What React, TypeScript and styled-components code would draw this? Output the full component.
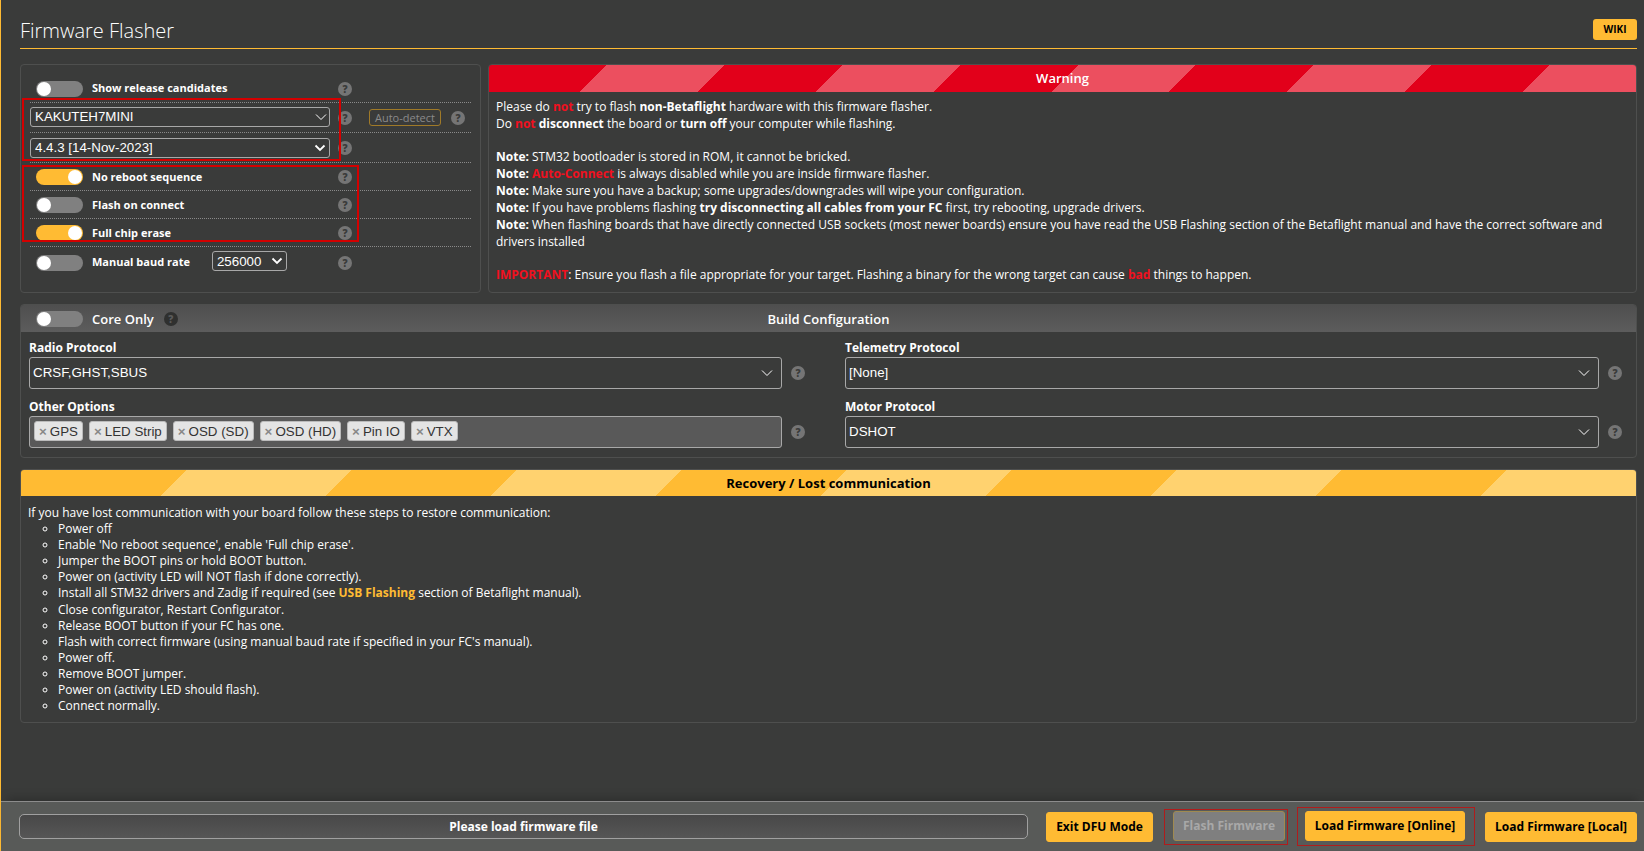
import React from "react"
import styled, { createGlobalStyle } from "styled-components"

const GlobalStyle = createGlobalStyle`
  html, body {
    margin: 0;
    height: 100%;
    background: #3a3b3a;
    overflow: hidden;
  }
  body {
    font-family: "Open Sans", sans-serif;
    font-size: 12px;
    color: #fff;
  }
  * {
    box-sizing: border-box;
  }
`

const Page = styled.div`
  display: flex;
  flex-direction: column;
  height: 100vh;
  border-left: 1px solid #ffbb33;
`

const Content = styled.main`
  flex: 1;
  padding: 0 7px 0 19px;
`

const TitleBar = styled.header`
  display: flex;
  justify-content: space-between;
  align-items: flex-start;
  height: 49px;
  border-bottom: 1px solid #ffbb33;
`

const Title = styled.h1`
  margin: 17px 0 0;
  font-size: 20px;
  font-weight: 300;
  line-height: 27px;
  color: #fff;
`

const WikiButton = styled.a`
  display: block;
  margin-top: 19px;
  width: 44px;
  height: 21px;
  border-radius: 3px;
  background: #ffbb33;
  color: #000;
  font-size: 10px;
  font-weight: 700;
  line-height: 21px;
  text-align: center;
`

const TopRow = styled.section`
  display: flex;
  gap: 7px;
  height: 229px;
  margin-top: 15px;
`

const OptionsPanel = styled.div`
  position: relative;
  width: 461px;
  padding: 0 9px;
  border: 1px solid #4e4f4e;
  border-radius: 4px;
`

const OptionRow = styled.div<{ $height: number; $top?: number; $last?: boolean }>`
  display: flex;
  align-items: center;
  height: ${(p) => p.$height}px;
  padding-top: ${(p) => p.$top ?? 0}px;
  border-bottom: ${(p) => (p.$last ? "none" : "1px dotted #8a8a8a")};
`

const ControlCell = styled.div`
  display: flex;
  align-items: center;
  width: 308px;
`

const Toggle = styled.span<{ $on?: boolean; $inset?: number }>`
  position: relative;
  flex: none;
  display: block;
  width: 47px;
  height: 16px;
  margin-left: ${(p) => p.$inset ?? 6}px;
  border-radius: 8px;
  background: ${(p) => (p.$on ? "#ffbb33" : "#808080")};

  &::after {
    content: "";
    position: absolute;
    top: 1px;
    left: ${(p) => (p.$on ? "32px" : "1px")};
    width: 14px;
    height: 14px;
    border-radius: 50%;
    background: #fff;
  }
`

const OptionLabel = styled.span<{ $up?: number }>`
  margin-left: 9px;
  margin-top: ${(p) => -(p.$up ?? 0)}px;
  font-size: 11px;
  font-weight: 700;
  color: #fff;
  white-space: nowrap;
`

const Help = styled.span<{ $dark?: boolean; $gap?: number }>`
  flex: none;
  display: block;
  width: 14px;
  height: 14px;
  margin-left: ${(p) => p.$gap ?? 0}px;
  border-radius: 50%;
  background: ${(p) => (p.$dark ? "#2f302f" : "#757575")};
  color: ${(p) => (p.$dark ? "#5a5a5a" : "#3a3b3a")};
  font-size: 10px;
  font-weight: 800;
  line-height: 14px;
  text-align: center;
`

const SelectWrap = styled.span<{ $width: number; $gap?: number; $up?: number }>`
  position: relative;
  display: block;
  flex: none;
  width: ${(p) => p.$width}px;
  margin-left: ${(p) => p.$gap ?? 0}px;
  margin-top: ${(p) => -(p.$up ?? 0)}px;
`

const NativeSelect = styled.select`
  display: block;
  width: 100%;
  height: 20px;
  padding: 0 4px;
  appearance: none;
  border: 1px solid #a8a8a8;
  border-radius: 3px;
  background: #3a3b3a;
  color: #fff;
  font-family: "Liberation Sans", Arial, sans-serif;
  font-size: 13.33px;
`

const Chevron = styled.svg<{ $right: number }>`
  position: absolute;
  top: 50%;
  right: ${(p) => p.$right}px;
  width: 12px;
  height: 8px;
  margin-top: -4px;
  fill: none;
  stroke: #fff;
  pointer-events: none;
`

const AutoDetect = styled.span`
  display: block;
  width: 72px;
  height: 17px;
  margin-left: 17px;
  border: 1px solid #a07a28;
  border-radius: 3px;
  color: #8a8a8a;
  font-size: 11px;
  line-height: 15px;
  text-align: center;
`

const RedFrame = styled.div<{ $left: number; $top: number; $width: number; $height: number }>`
  position: absolute;
  left: ${(p) => p.$left}px;
  top: ${(p) => p.$top}px;
  width: ${(p) => p.$width}px;
  height: ${(p) => p.$height}px;
  border: 2px solid #d40000;
  pointer-events: none;
`

const Box = styled.div<{ $grow?: boolean }>`
  flex: ${(p) => (p.$grow ? 1 : "none")};
  border: 1px solid #4e4f4e;
  border-radius: 4px;
  overflow: hidden;
`

const StripedTitle = styled.div<{ $base: string; $light: string; $band: number; $dark?: boolean; $height: number }>`
  height: ${(p) => p.$height}px;
  background: repeating-linear-gradient(
    135deg,
    ${(p) => p.$base} 0,
    ${(p) => p.$base} ${(p) => p.$band}px,
    ${(p) => p.$light} ${(p) => p.$band}px,
    ${(p) => p.$light} ${(p) => p.$band * 2}px
  );
  color: ${(p) => (p.$dark ? "#000" : "#fff")};
  font-size: 13px;
  font-weight: ${(p) => (p.$dark ? 700 : 600)};
  line-height: ${(p) => p.$height}px;
  text-align: center;
`

const NoteBody = styled.div`
  padding: 6px 7px;
  line-height: 17px;
  color: #fff;

  p {
    margin: 0;
  }
  p + p {
    margin-top: 16px;
  }
`

const Alert = styled.span`
  color: #f0101f;
  font-weight: 700;
`

const BuildBox = styled(Box)`
  margin-top: 11px;
  height: 154px;
`

const BuildTitle = styled.div`
  position: relative;
  display: flex;
  align-items: center;
  height: 27px;
  background: linear-gradient(180deg, #4f4f4f, #5c5c5c);
  font-size: 13px;
  font-weight: 600;
`

const BuildTitleText = styled.span`
  position: absolute;
  left: 0;
  right: 0;
  text-align: center;
  pointer-events: none;
`

const CoreOnly = styled.span`
  margin-left: 9px;
  margin-right: 10px;
  font-weight: 600;
`

const BuildGrid = styled.div`
  display: grid;
  grid-template-columns: 816px 1fr;
  padding: 8px 0 0 8px;
`

const Field = styled.div`
  height: 59px;
`

const FieldLabel = styled.div`
  font-weight: 700;
  line-height: 15px;
  height: 16px;
`

const FieldRow = styled.div`
  display: flex;
  align-items: center;
  margin-top: 1px;
`

const Multi = styled.div<{ $filled?: boolean; $width?: number }>`
  position: relative;
  display: flex;
  align-items: center;
  gap: 6px;
  width: ${(p) => p.$width ?? 753}px;
  height: 32px;
  padding: 0 ${(p) => (p.$filled ? 4 : 3)}px 2px;
  border: 1px solid #a8a8a8;
  border-radius: 3px;
  background: ${(p) => (p.$filled ? "#595959" : "#3a3b3a")};
  font-family: "Liberation Sans", Arial, sans-serif;
  font-size: 13.33px;
`

const Tag = styled.span`
  display: flex;
  align-items: center;
  height: 20px;
  padding: 0 4px;
  border: 1px solid #bbb;
  border-radius: 3px;
  background: #e4e4e4;
  color: #333;

  i {
    margin-right: 3px;
    color: #888;
    font-style: normal;
    font-weight: 700;
  }
`

const RecoveryBox = styled(Box)`
  margin-top: 11px;
  height: 254px;
`

const RecoveryBody = styled.div`
  padding: 9px 7px;
  line-height: 16px;
`

const Steps = styled.ul`
  margin: 0;
  padding-left: 30px;
  list-style: circle;

  li:nth-child(5) {
    height: 17px;
  }
`

const Highlight = styled.b`
  color: #ffbb33;
`

const Footer = styled.footer`
  display: flex;
  align-items: center;
  height: 50px;
  padding: 0 7px 0 18px;
  border-top: 1px solid #8c8c8c;
  background: #585a58;
  box-shadow: 0 -8px 10px -6px rgba(0, 0, 0, 0.25);
`

const Progress = styled.div`
  width: 1009px;
  height: 25px;
  margin-right: 18px;
  border: 1px solid #a0a0a0;
  border-radius: 5px;
  background: linear-gradient(180deg, #484848, #565656);
  font-weight: 700;
  line-height: 23px;
  text-align: center;
`

const ActionButton = styled.a<{ $disabled?: boolean; $width: number; $gap?: number }>`
  display: block;
  flex: none;
  width: ${(p) => p.$width}px;
  height: 30px;
  margin-left: ${(p) => p.$gap ?? 0}px;
  border: 1px solid ${(p) => (p.$disabled ? "#a08a50" : "#ffbb33")};
  border-radius: 3px;
  background: ${(p) => (p.$disabled ? "#7f7f7f" : "#ffbb33")};
  color: ${(p) => (p.$disabled ? "#a8a8a8" : "#000")};
  font-size: 12px;
  font-weight: 700;
  line-height: 28px;
  text-align: center;
`

const Marked = styled.span<{ $pad: string; $gap: number }>`
  display: block;
  flex: none;
  margin-left: ${(p) => p.$gap}px;
  padding: ${(p) => p.$pad};
  border: 1px solid #b01c1c;
`

const Arrow = () => (
  <Chevron viewBox="0 0 12 8" $right={4}>
    <path d="M1.5 1.5 L6 6 L10.5 1.5" strokeWidth="1.8" />
  </Chevron>
)

const ThinArrow = ({ right }: { right: number }) => (
  <Chevron viewBox="0 0 12 8" $right={right}>
    <path d="M1 1.5 L6 6.5 L11 1.5" strokeWidth="1" />
  </Chevron>
)

const steps = [
  "Power off",
  "Enable 'No reboot sequence', enable 'Full chip erase'.",
  "Jumper the BOOT pins or hold BOOT button.",
  "Power on (activity LED will NOT flash if done correctly).",
  null,
  "Close configurator, Restart Configurator.",
  "Release BOOT button if your FC has one.",
  "Flash with correct firmware (using manual baud rate if specified in your FC's manual).",
  "Power off.",
  "Remove BOOT jumper.",
  "Power on (activity LED should flash).",
  "Connect normally.",
]

const tags = ["GPS", "LED Strip", "OSD (SD)", "OSD (HD)", "Pin IO", "VTX"]

export default function App() {
  return (
    <Page>
      <GlobalStyle />
      <Content>
        <TitleBar>
          <Title>Firmware Flasher</Title>
          <WikiButton>WIKI</WikiButton>
        </TitleBar>

        <TopRow>
          <OptionsPanel>
            <OptionRow $height={38} $top={10}>
              <ControlCell>
                <Toggle />
                <OptionLabel $up={2}>Show release candidates</OptionLabel>
              </ControlCell>
              <Help>?</Help>
            </OptionRow>
            <OptionRow $height={30}>
              <ControlCell>
                <SelectWrap $width={300} $up={2}>
                  <NativeSelect defaultValue="KAKUTEH7MINI">
                    <option>KAKUTEH7MINI</option>
                  </NativeSelect>
                  <ThinArrow right={3} />
                </SelectWrap>
              </ControlCell>
              <Help>?</Help>
              <AutoDetect>Auto-detect</AutoDetect>
              <Help $gap={10}>?</Help>
            </OptionRow>
            <OptionRow $height={30}>
              <ControlCell>
                <SelectWrap $width={300}>
                  <NativeSelect defaultValue="4.4.3 [14-Nov-2023]">
                    <option>4.4.3 [14-Nov-2023]</option>
                  </NativeSelect>
                  <Arrow />
                </SelectWrap>
              </ControlCell>
              <Help>?</Help>
            </OptionRow>
            <OptionRow $height={28}>
              <ControlCell>
                <Toggle $on />
                <OptionLabel>No reboot sequence</OptionLabel>
              </ControlCell>
              <Help>?</Help>
            </OptionRow>
            <OptionRow $height={28}>
              <ControlCell>
                <Toggle />
                <OptionLabel>Flash on connect</OptionLabel>
              </ControlCell>
              <Help>?</Help>
            </OptionRow>
            <OptionRow $height={28}>
              <ControlCell>
                <Toggle $on />
                <OptionLabel>Full chip erase</OptionLabel>
              </ControlCell>
              <Help>?</Help>
            </OptionRow>
            <OptionRow $height={30} $top={2} $last>
              <ControlCell>
                <Toggle />
                <OptionLabel $up={4}>Manual baud rate</OptionLabel>
                <SelectWrap $width={75} $gap={22} $up={4}>
                  <NativeSelect defaultValue="256000">
                    <option>256000</option>
                  </NativeSelect>
                  <Arrow />
                </SelectWrap>
              </ControlCell>
              <Help>?</Help>
            </OptionRow>
            <RedFrame $left={1} $top={33} $width={319} $height={63} />
            <RedFrame $left={1} $top={100} $width={337} $height={77} />
          </OptionsPanel>

          <Box $grow>
            <StripedTitle $base="#e2001a" $light="#ec4f5f" $band={83.3} $height={27}>
              Warning
            </StripedTitle>
            <NoteBody>
              <p>
                Please do <Alert>not</Alert> try to flash <b>non-Betaflight</b> hardware with this firmware flasher.
                <br />
                Do <Alert>not</Alert> <b>disconnect</b> the board or <b>turn off</b> your computer while flashing.
              </p>
              <p>
                <b>Note:</b> STM32 bootloader is stored in ROM, it cannot be bricked.
                <br />
                <b>Note:</b> <Alert>Auto-Connect</Alert> is always disabled while you are inside firmware flasher.
                <br />
                <b>Note:</b> Make sure you have a backup; some upgrades/downgrades will wipe your configuration.
                <br />
                <b>Note:</b> If you have problems flashing <b>try disconnecting all cables from your FC</b> first, try
                rebooting, upgrade drivers.
                <br />
                <b>Note:</b> When flashing boards that have directly connected USB sockets (most newer boards) ensure you
                have read the USB Flashing section of the Betaflight manual and have the correct software and drivers
                installed
              </p>
              <p>
                <Alert>IMPORTANT</Alert>: Ensure you flash a file appropriate for your target. Flashing a binary for the
                wrong target can cause <Alert>bad</Alert> things to happen.
              </p>
            </NoteBody>
          </Box>
        </TopRow>

        <BuildBox>
          <BuildTitle>
            <BuildTitleText>Build Configuration</BuildTitleText>
            <Toggle $inset={15} />
            <CoreOnly>Core Only</CoreOnly>
            <Help $dark>?</Help>
          </BuildTitle>
          <BuildGrid>
            <Field>
              <FieldLabel>Radio Protocol</FieldLabel>
              <FieldRow>
                <Multi>
                  CRSF,GHST,SBUS
                  <ThinArrow right={8} />
                </Multi>
                <Help $gap={9}>?</Help>
              </FieldRow>
            </Field>
            <Field>
              <FieldLabel>Telemetry Protocol</FieldLabel>
              <FieldRow>
                <Multi $width={754}>
                  [None]
                  <ThinArrow right={8} />
                </Multi>
                <Help $gap={9}>?</Help>
              </FieldRow>
            </Field>
            <Field>
              <FieldLabel>Other Options</FieldLabel>
              <FieldRow>
                <Multi $filled>
                  {tags.map((tag) => (
                    <Tag key={tag}>
                      <i>×</i>
                      {tag}
                    </Tag>
                  ))}
                </Multi>
                <Help $gap={9}>?</Help>
              </FieldRow>
            </Field>
            <Field>
              <FieldLabel>Motor Protocol</FieldLabel>
              <FieldRow>
                <Multi $width={754}>
                  DSHOT
                  <ThinArrow right={8} />
                </Multi>
                <Help $gap={9}>?</Help>
              </FieldRow>
            </Field>
          </BuildGrid>
        </BuildBox>

        <RecoveryBox>
          <StripedTitle $base="#ffbb33" $light="#ffd26f" $band={116.7} $dark $height={26}>
            Recovery / Lost communication
          </StripedTitle>
          <RecoveryBody>
            If you have lost communication with your board follow these steps to restore communication:
            <Steps>
              {steps.map((step, i) => (
                <li key={i}>
                  {step ?? (
                    <>
                      Install all STM32 drivers and Zadig if required (see <Highlight>USB Flashing</Highlight> section
                      of Betaflight manual).
                    </>
                  )}
                </li>
              ))}
            </Steps>
          </RecoveryBody>
        </RecoveryBox>
      </Content>

      <Footer>
        <Progress>Please load firmware file</Progress>
        <ActionButton $width={107}>Exit DFU Mode</ActionButton>
        <Marked $gap={11} $pad="1px 2px 3px 8px">
          <ActionButton $width={112} $disabled>
            Flash Firmware
          </ActionButton>
        </Marked>
        <Marked $gap={9} $pad="3px 9px 4px 7px">
          <ActionButton $width={160}>Load Firmware [Online]</ActionButton>
        </Marked>
        <ActionButton $width={152} $gap={10}>
          Load Firmware [Local]
        </ActionButton>
      </Footer>
    </Page>
  )
}
